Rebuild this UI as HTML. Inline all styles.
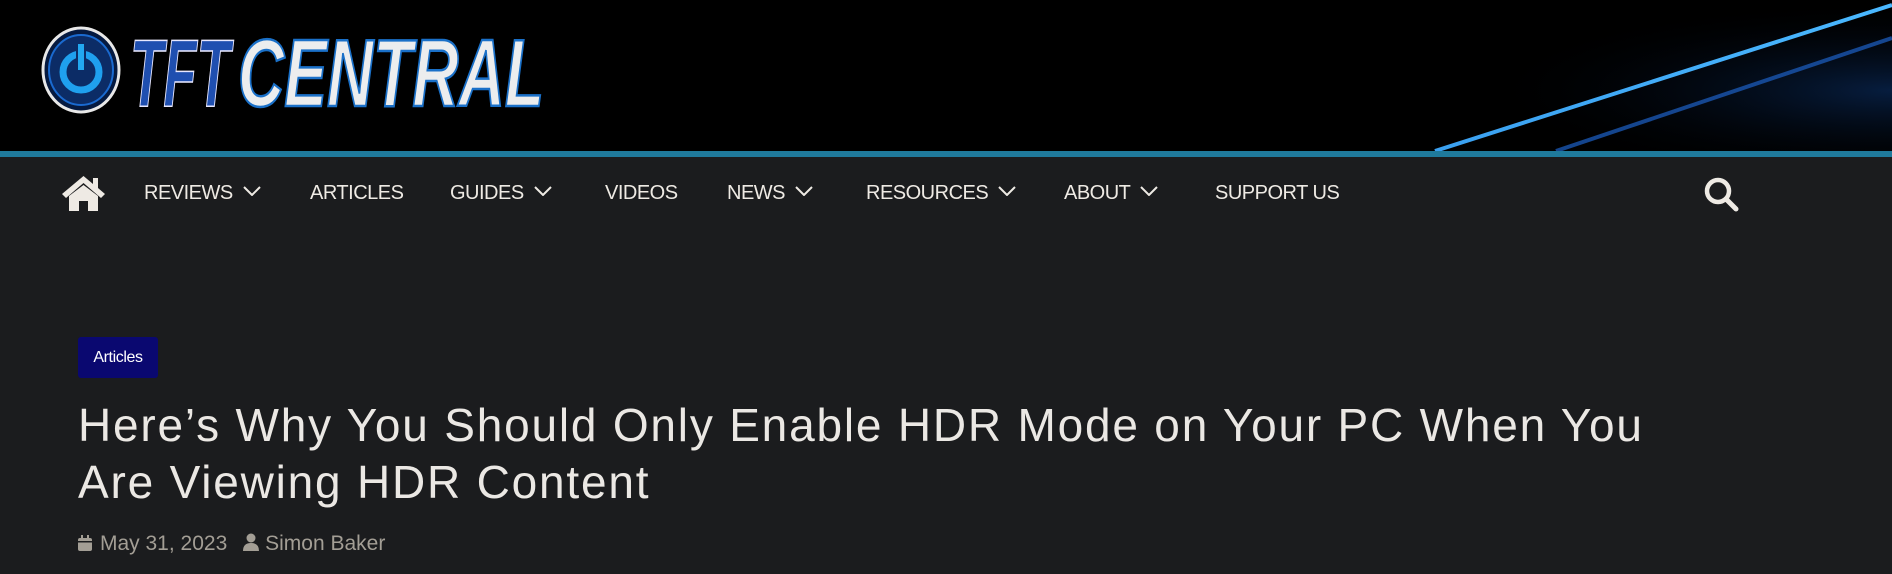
<!DOCTYPE html>
<html><head><meta charset="utf-8"><style>
*{margin:0;padding:0;box-sizing:border-box}
body{width:1892px;height:574px;background:#1b1c1e;font-family:"Liberation Sans",sans-serif;overflow:hidden;position:relative}
.hdr{position:absolute;left:0;top:0;width:1892px;height:151px;background:#000;overflow:hidden}
.bar{position:absolute;left:0;top:151px;width:1892px;height:6px;background:#1f7a9c}
.nav{position:absolute;top:157px;left:0;width:1892px;height:74px;background:#1b1c1e}
.ni{position:absolute;top:181px;color:#eeeae4;font-size:20px;letter-spacing:-0.5px;line-height:24px}
.ni svg{margin-left:10px;vertical-align:3px}
.badge{position:absolute;left:78px;top:337px;width:80px;height:41px;background:#0a0870;border-radius:3px;color:#fff;font-size:16px;line-height:41px;text-align:center;letter-spacing:-0.4px}
h1{position:absolute;left:78px;top:397px;width:1690px;color:#ebe8e4;font-weight:normal;font-size:46px;line-height:57px;letter-spacing:1.8px}
.meta{position:absolute;left:78px;top:532px;color:#a39e95;font-size:21px;letter-spacing:0px}
</style></head><body>
<div class="hdr">
<svg width="1892" height="151" style="position:absolute;left:0;top:0">
<defs><radialGradient id="g" cx="1.0" cy="0.6" r="0.6"><stop offset="0" stop-color="#0a2a5a"/><stop offset="1" stop-color="#000" stop-opacity="0"/></radialGradient>
<linearGradient id="lg" x1="0" x2="1"><stop offset="0" stop-color="#3aa0f0"/><stop offset="1" stop-color="#4ab8ff"/></linearGradient></defs>
<rect x="1200" y="0" width="692" height="151" fill="url(#g)" opacity="0.7"/>
<line x1="1435" y1="151" x2="1892" y2="5" stroke="url(#lg)" stroke-width="4"/>
<line x1="1556" y1="151" x2="1892" y2="38" stroke="#1a56b0" stroke-width="4" opacity="0.8"/>
<ellipse cx="81" cy="70" rx="38" ry="42" fill="#061a40" stroke="#e8e8e8" stroke-width="3"/>
<ellipse cx="81" cy="70" rx="32" ry="35" fill="#0c2c66" stroke="#1a6ad0" stroke-width="2"/>
<circle cx="81" cy="72" r="18" fill="none" stroke="#1fa0ee" stroke-width="7"/>
<rect x="76" y="44" width="10" height="28" fill="#0c2c66"/>
<rect x="78" y="44" width="6" height="26" fill="#22a8f0"/>
<text x="130" y="106" font-family="Liberation Sans" font-weight="bold" font-style="italic" font-size="96" fill="#1f4fb0" stroke="#e8e8ff" stroke-width="1.5" textLength="100" lengthAdjust="spacingAndGlyphs">TFT</text>
<text x="238" y="106" font-family="Liberation Sans" font-weight="bold" font-style="italic" font-size="96" fill="#ecedee" stroke="#1a70c8" stroke-width="2.5" textLength="306" lengthAdjust="spacingAndGlyphs">CENTRAL</text>
</svg>
</div>
<div class="bar"></div>
<div class="nav"></div>
<svg style="position:absolute;left:60px;top:174px" width="47" height="38" viewBox="0 0 47 38"><path d="M23.5 2 L2 20 L6 24 L23.5 9 L41 24 L45 20 L38 14 V4 H33 V10 Z" fill="#eeeae4"/><path d="M9 22 L23.5 11 L38 22 V37 H28 V27 H19 V37 H9 Z" fill="#eeeae4"/></svg>
<div class="ni" style="left:144px">REVIEWS<svg width="18" height="10"><path d="M1 1 L9 9 L17 1" fill="none" stroke="#eeeae4" stroke-width="2"/></svg></div>
<div class="ni" style="left:310px">ARTICLES</div>
<div class="ni" style="left:450px">GUIDES<svg width="18" height="10"><path d="M1 1 L9 9 L17 1" fill="none" stroke="#eeeae4" stroke-width="2"/></svg></div>
<div class="ni" style="left:605px">VIDEOS</div>
<div class="ni" style="left:727px">NEWS<svg width="18" height="10"><path d="M1 1 L9 9 L17 1" fill="none" stroke="#eeeae4" stroke-width="2"/></svg></div>
<div class="ni" style="left:866px">RESOURCES<svg width="18" height="10"><path d="M1 1 L9 9 L17 1" fill="none" stroke="#eeeae4" stroke-width="2"/></svg></div>
<div class="ni" style="left:1064px">ABOUT<svg width="18" height="10"><path d="M1 1 L9 9 L17 1" fill="none" stroke="#eeeae4" stroke-width="2"/></svg></div>
<div class="ni" style="left:1215px">SUPPORT US</div>
<svg style="position:absolute;left:1703px;top:176px" width="38" height="38" viewBox="0 0 38 38"><circle cx="15" cy="15" r="11" fill="none" stroke="#eeeae4" stroke-width="4.5"/><path d="M23 23 L33 33" stroke="#eeeae4" stroke-width="5" stroke-linecap="round"/></svg>
<div class="badge">Articles</div>
<h1>Here’s Why You Should Only Enable HDR Mode on Your PC When You<br>Are Viewing HDR Content</h1>
<div class="meta"><svg width="14" height="16" viewBox="0 0 14 16" style="vertical-align:-1px;margin-right:8px"><rect x="0" y="3" width="14" height="13" rx="2" fill="#a39e95"/><rect x="3" y="0" width="2" height="4" fill="#a39e95"/><rect x="9" y="0" width="2" height="4" fill="#a39e95"/><rect x="0" y="6" width="14" height="1.5" fill="#1b1c1e"/></svg>May 31, 2023 <svg width="16" height="18" viewBox="0 0 16 18" style="vertical-align:-1px;margin:0 6px 0 10px"><circle cx="8" cy="5" r="4.5" fill="#a39e95"/><path d="M0 18 Q0 10 8 10 Q16 10 16 18 Z" fill="#a39e95"/></svg>Simon Baker</div>
</body></html>
